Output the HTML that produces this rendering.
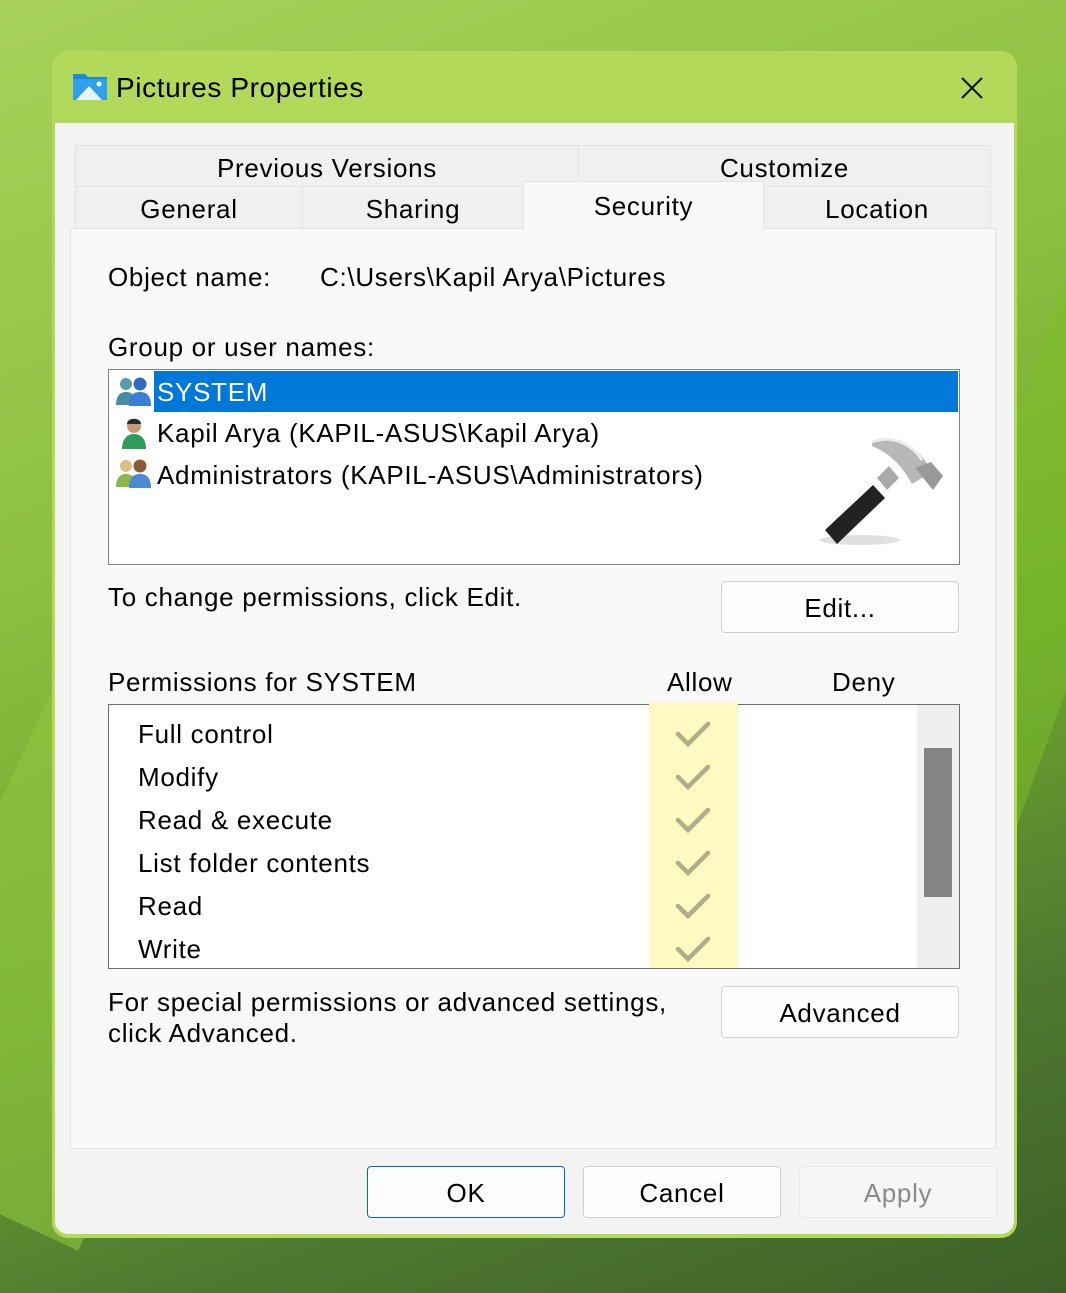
<!DOCTYPE html>
<html style="width:1066px;height:1293px;overflow:hidden;background:#6fa62e"><head><style>
*{margin:0;padding:0;box-sizing:border-box}
body{width:1066px;height:1293px;overflow:hidden;position:relative;font-family:"Liberation Sans",sans-serif;color:#000;
background:linear-gradient(160deg,#a8d25a 0%,#8cc040 35%,#6fa62e 60%,#4f7a30 80%,#3d6028 100%)}
.a{position:absolute}
.t{position:absolute;font-size:26px;letter-spacing:.7px;white-space:nowrap;line-height:30px}
.win{left:52px;top:51px;width:965px;height:1187px;border-radius:16px;background:#b3d95a;overflow:hidden}
.body{left:55px;top:123px;width:959px;height:1111px;background:#f3f3f3;border-radius:0 0 13px 13px}
.tab{position:absolute;background:#f0f0f0;border:1px solid #e3e3e3;text-align:center;font-size:26px;letter-spacing:.7px;line-height:44px}
.btn{position:absolute;background:#fdfdfd;border:1px solid #d0d0d0;border-radius:4px;text-align:center;font-size:26px;letter-spacing:.7px;line-height:52px}
</style></head><body>
<div class="a" style="left:0;top:0;width:1066px;height:1293px;overflow:hidden">
<div class="a" style="left:-60px;top:700px;width:260px;height:520px;background:#8dc63f;transform:rotate(25deg);opacity:.6"></div>
<div class="a" style="left:980px;top:80px;width:140px;height:900px;background:#7cbf2a;transform:rotate(20deg);opacity:.5"></div>
</div>
<div class="a win"></div>
<div class="a body"></div>
<svg class="a" style="left:72px;top:71px" width="36" height="30" viewBox="0 0 36 30"><path d="M1 3h12l3 3h19v23H1z" fill="#1e88d8"/><path d="M1 8h34v21H1z" fill="#2fa0ea"/><path d="M4 29l13-14 13 14z" fill="#e8f4fc"/><circle cx="27" cy="13" r="2.5" fill="#fff"/></svg>
<div class="t" style="left:116px;top:73px;font-size:28px;letter-spacing:.6px">Pictures Properties</div>
<svg class="a" style="left:960px;top:76px" width="24" height="24"><path d="M2 2L22 22M22 2L2 22" stroke="#111" stroke-width="2"/></svg>
<div class="a" style="left:70px;top:228px;width:926px;height:921px;background:#f9f9f9;border:1px solid #e3e3e3"></div>
<div class="tab" style="left:75px;top:145px;width:504px;height:42px">Previous Versions</div>
<div class="tab" style="left:578px;top:145px;width:413px;height:42px">Customize</div>
<div class="tab" style="left:75px;top:186px;width:228px;height:43px">General</div>
<div class="tab" style="left:302px;top:186px;width:222px;height:43px">Sharing</div>
<div class="tab" style="left:763px;top:186px;width:228px;height:43px">Location</div>
<div class="tab" style="left:523px;top:181px;width:241px;height:49px;background:#f9f9f9;border-bottom:none;line-height:48px">Security</div>
<div class="t" style="left:108px;top:262px">Object name:</div>
<div class="t" style="left:320px;top:262px">C:\Users\Kapil Arya\Pictures</div>
<div class="t" style="left:108px;top:332px">Group or user names:</div>
<div class="a" style="left:108px;top:369px;width:852px;height:196px;background:#fff;border:1px solid #828282"></div>
<div class="a" style="left:154px;top:371px;width:804px;height:41px;background:#0078d7"></div>
<svg class="a" style="left:115px;top:375px" width="38" height="32"><circle cx="11" cy="9" r="6" fill="#5a9ab0"/><path d="M1 30c0-10 5-13 10-13s10 3 10 13z" fill="#4a8aa8"/><circle cx="25" cy="9" r="6.5" fill="#2f6cc0"/><path d="M14 31c0-11 5-14 11-14s11 3 11 14z" fill="#3b7fd4"/></svg>
<div class="t" style="left:157px;top:377px;color:#fff">SYSTEM</div>
<svg class="a" style="left:118px;top:415px" width="32" height="36"><circle cx="16" cy="11" r="7" fill="#c79a72"/><path d="M9 9c0-7 14-7 14 0" fill="#2a2a2a"/><path d="M4 34c0-11 6-15 12-15s12 4 12 15z" fill="#2f9a5a"/></svg>
<div class="t" style="left:157px;top:418px">Kapil Arya (KAPIL-ASUS\Kapil Arya)</div>
<svg class="a" style="left:115px;top:457px" width="38" height="32"><circle cx="11" cy="9" r="6" fill="#d8c080"/><path d="M1 30c0-10 5-13 10-13s10 3 10 13z" fill="#8ab84a"/><circle cx="25" cy="9" r="6.5" fill="#8a5a3a"/><path d="M14 31c0-11 5-14 11-14s11 3 11 14z" fill="#4a8ad0"/></svg>
<div class="t" style="left:157px;top:460px">Administrators (KAPIL-ASUS\Administrators)</div>
<svg class="a" style="left:815px;top:430px" width="135" height="120" viewBox="0 0 135 120"><ellipse cx="45" cy="110" rx="40" ry="5" fill="#ccc" opacity=".6"/><path d="M58 55L10 100l12 14 48-46z" fill="#222"/><path d="M62 48l10 12 12-12-10-12z" fill="#aaa"/><path d="M57 12c20-10 45 0 60 30l-20 12c-8-15-20-30-40-38z" fill="#b8b8b8"/><path d="M100 38l16-6 12 14-10 14z" fill="#999"/><path d="M57 12c20-8 40 2 50 18" stroke="#eee" stroke-width="3" fill="none"/></svg>
<div class="t" style="left:108px;top:582px">To change permissions, click Edit.</div>
<div class="btn" style="left:721px;top:581px;width:238px;height:52px">Edit...</div>
<div class="t" style="left:108px;top:667px">Permissions for SYSTEM</div>
<div class="t" style="left:667px;top:667px">Allow</div>
<div class="t" style="left:832px;top:667px">Deny</div>
<div class="a" style="left:108px;top:704px;width:852px;height:265px;background:#fff;border:1px solid #6e6e6e"></div>
<div class="a" style="left:649px;top:702px;width:89px;height:266px;background:#fff9c2"></div>
<div class="a" style="left:917px;top:705px;width:42px;height:263px;background:#efefef"></div>
<div class="a" style="left:924px;top:748px;width:28px;height:149px;background:#858585"></div>
<div class="t" style="left:138px;top:719px">Full control</div>
<div class="t" style="left:138px;top:762px">Modify</div>
<div class="t" style="left:138px;top:805px">Read &amp; execute</div>
<div class="t" style="left:138px;top:848px">List folder contents</div>
<div class="t" style="left:138px;top:891px">Read</div>
<div class="t" style="left:138px;top:934px">Write</div>
<svg class="a" style="left:674px;top:722px" width="40" height="245"><g stroke="#b1ad86" stroke-width="4.5" fill="none" stroke-linecap="round"><path d="M4 12l10 10 20-20"/><path d="M4 55l10 10 20-20"/><path d="M4 98l10 10 20-20"/><path d="M4 141l10 10 20-20"/><path d="M4 184l10 10 20-20"/><path d="M4 227l10 10 20-20"/></g></svg>
<div class="t" style="left:108px;top:987px">For special permissions or advanced settings,</div>
<div class="t" style="left:108px;top:1018px">click Advanced.</div>
<div class="btn" style="left:721px;top:986px;width:238px;height:52px">Advanced</div>
<div class="btn" style="left:367px;top:1166px;width:198px;height:52px;border:1px solid #0067c0">OK</div>
<div class="btn" style="left:583px;top:1166px;width:198px;height:52px">Cancel</div>
<div class="btn" style="left:799px;top:1166px;width:198px;height:52px;background:#f6f6f6;border-color:#e8e8e8;color:#8a8a8a">Apply</div>
</body></html>
